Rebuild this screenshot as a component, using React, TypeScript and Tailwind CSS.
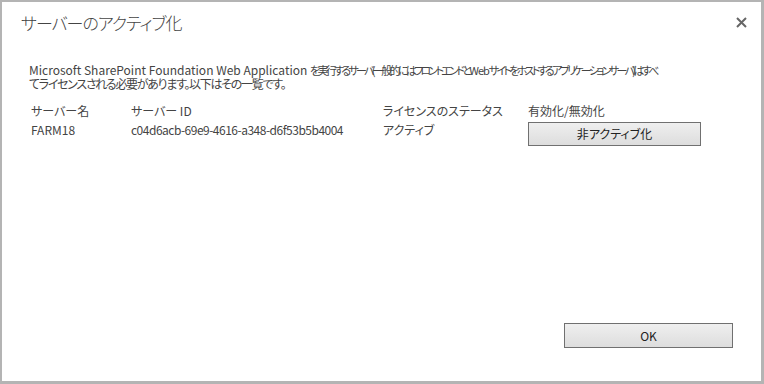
import React from "react";

const jp = { fontFamily: '"Noto Sans CJK JP", "Noto Sans", sans-serif', fontFeatureSettings: '"palt"' } as React.CSSProperties;

export default function App() {
  return (
    <div className="w-[764px] h-[384px] bg-[#b4b4b4] pt-[2px] pl-[2px] pr-[3px] pb-[3px]" style={jp}>
      <div className="w-full h-full bg-white flex flex-col relative">
        <div className="flex items-start justify-between pl-[19px] pr-[14px] pt-[9px]">
          <div className="text-[17px] leading-[24px] tracking-[-1px] text-[#444] font-light">サーバーのアクティブ化</div>
          <button className="mt-[5px] w-[12px] h-[12px] flex items-center justify-center">
            <svg width="11" height="11" viewBox="0 0 11 11">
              <path d="M1 1L10 10M10 1L1 10" stroke="#666" strokeWidth="2" />
            </svg>
          </button>
        </div>
        <div className="pl-[27px] pt-[28px] text-[12px] leading-[13px] text-[#444] whitespace-nowrap">
          <div>
            Microsoft SharePoint Foundation Web Application{" "}
            <span className="text-[11px] tracking-[-2.7px]">を実行するサーバ(一般的にはフロントエンドと</span>
            <span className="text-[11px] tracking-[-1px]">Web</span>
            <span className="text-[11px] tracking-[-2.7px]">サイトをホストするアプリケーションサーバ)はすべ</span>
          </div>
          <div className="tracking-[-1.3px]">てライセンスされる必要があります。以下はその一覧です。</div>
        </div>
        <div className="pl-[29px] pt-[14px] text-[12px] leading-[14px] text-[#444]">
          <div className="flex h-[18px] items-start">
            <div className="w-[100px]">サーバー名</div>
            <div className="w-[252px]">サーバー ID</div>
            <div className="w-[145px]">ライセンスのステータス</div>
            <div>有効化/無効化</div>
          </div>
          <div className="flex items-start">
            <div className="w-[100px] pt-[1px]">FARM18</div>
            <div className="w-[252px] pt-[1px] tracking-[-0.5px]">c04d6acb-69e9-4616-a348-d6f53b5b4004</div>
            <div className="w-[145px] pt-[1px]">アクティブ</div>
            <button className="w-[173px] h-[24px] border border-[#707070] bg-gradient-to-b from-[#efefef] to-[#dddddd] text-[12px] text-[#222]">
              非アクティブ化
            </button>
          </div>
        </div>
        <div className="flex-1" />
        <div className="flex justify-end pr-[28px] pb-[33px]">
          <button className="w-[169px] h-[25px] border border-[#707070] bg-gradient-to-b from-[#efefef] to-[#dddddd] text-[12px] text-[#222]">
            OK
          </button>
        </div>
      </div>
    </div>
  );
}
